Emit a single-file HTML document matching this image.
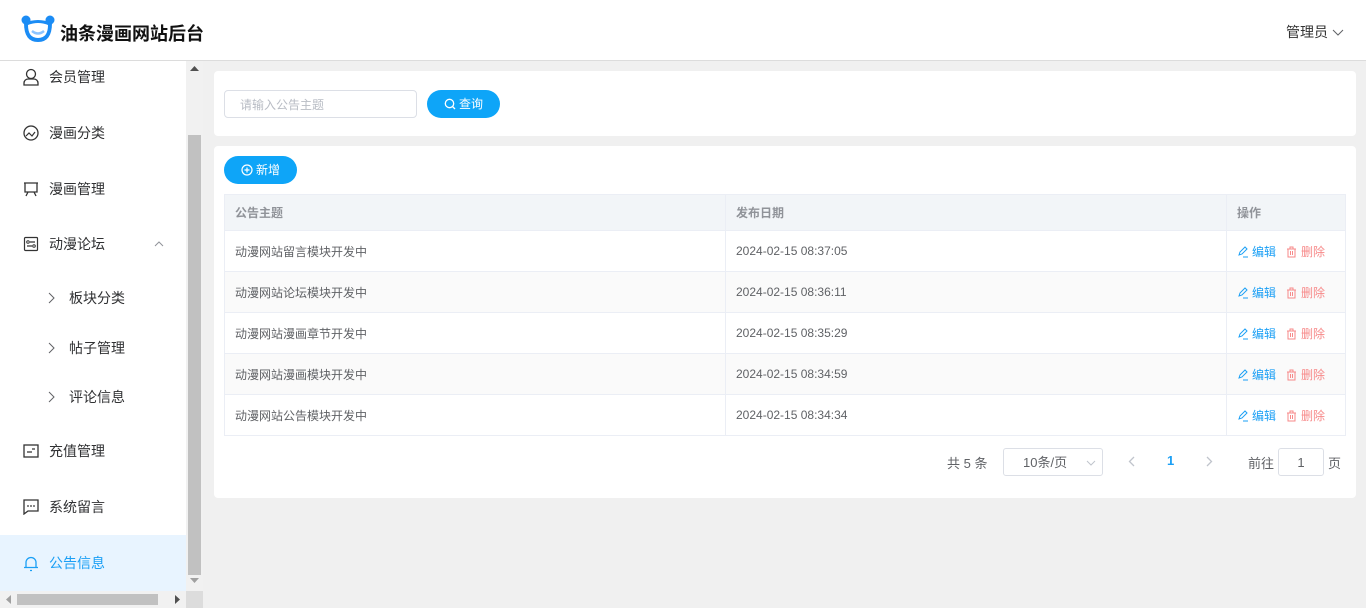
<!DOCTYPE html>
<html><head><meta charset="utf-8"><style>
*{box-sizing:border-box;margin:0;padding:0}
body{width:1366px;height:608px;overflow:hidden;font-family:"Liberation Sans","Noto Sans CJK SC",sans-serif;background:#f0f0f0;position:relative;color:#606266}
.hdr{position:absolute;left:0;top:0;width:1366px;height:61px;background:#fff;border-bottom:1px solid #dcdcdc}
.logo{position:absolute;left:21px;top:15px}
.title{position:absolute;left:60px;top:20px;font-size:18px;font-weight:bold;color:#111}
.user{position:absolute;left:1286px;top:22px;font-size:14px;color:#333}
.side{position:absolute;left:0;top:61px;width:186px;height:530px;background:#fff;overflow:hidden}
.mi{position:absolute;left:0;width:186px;height:56px;font-size:14px;color:#303133}
.mi span{position:absolute;left:49px;top:50%;transform:translateY(-50%)}
.mi svg{position:absolute;left:23px;top:50%;transform:translateY(-50%)}
.sub span{left:69px}
.sub svg{left:47px}
.act{background:#e8f4ff;color:#1a9ff5}
.vs{position:absolute;left:186px;top:61px;width:17px;height:530px;background:#f1f1f1}
.thumb{position:absolute;left:188px;top:135px;width:13px;height:440px;background:#c1c1c1}
.hs{position:absolute;left:0;top:591px;width:186px;height:17px;background:#f1f1f1}
.hthumb{position:absolute;left:17px;top:594px;width:141px;height:11px;background:#c1c1c1}
.corner{position:absolute;left:186px;top:591px;width:17px;height:17px;background:#dcdcdc}
.card{position:absolute;left:214px;width:1142px;background:#fff;border-radius:4px}
.inp{position:absolute;left:224px;top:90px;width:193px;height:28px;border:1px solid #dcdfe6;border-radius:4px;font-size:12px;color:#b8bcc4;padding:5px 15px}
.btn{position:absolute;height:28px;background:#0ea5f8;color:#fff;border-radius:14px;font-size:12px;line-height:28px;text-align:center}
.btn svg{vertical-align:-2px;margin-right:3px}
table{position:absolute;left:224px;top:194px;width:1122px;border-collapse:collapse;font-size:12px}
td,th{border:1px solid #ebeef5;height:41px;padding:0 10px;text-align:left;color:#606266;font-weight:normal}
th{height:36px;background:#f2f5f8;color:#909399;font-weight:bold}
tr:nth-child(odd) td{background:#fafafa}
.ed{color:#1a9ff5}.de{color:#f78989;margin-left:10px}
.ed svg,.de svg{vertical-align:-2px;margin-right:4px}
.pg{position:absolute;font-size:13px;color:#606266}
</style></head><body>
<div class="hdr">
<svg class="logo" width="34" height="28" viewBox="0 0 34 28"><circle cx="5" cy="5" r="4.5" fill="#1b8cf5"/><circle cx="29" cy="5" r="4.5" fill="#1b8cf5"/><path d="M3 8 Q3 27 17 27 Q31 27 31 8 Q17 2 3 8z" fill="#1b8cf5"/><path d="M7 10 Q7 23 17 23 Q27 23 27 10 Q17 6 7 10z" fill="#fff"/><path d="M11 16 q6 5 12 0" stroke="#8cc4ff" stroke-width="2.5" fill="none"/></svg>
<div class="title">油条漫画网站后台</div>
<div class="user">管理员 <svg width="12" height="8" viewBox="0 0 12 8"><path d="M1 1l5 5 5-5" stroke="#606266" fill="none"/></svg></div>
</div>
<div class="side">
<div class="mi" style="top:-12px"><svg width="16" height="18" viewBox="0 0 16 18"><circle cx="8" cy="6" r="4.5" stroke="#333" fill="none" stroke-width="1.3"/><path d="M1 17v-2a4 4 0 0 1 4-4h6a4 4 0 0 1 4 4v2z" stroke="#333" fill="none" stroke-width="1.3"/></svg><span>会员管理</span></div>
<div class="mi" style="top:44px"><svg width="16" height="16" viewBox="0 0 16 16"><circle cx="8" cy="8" r="7" stroke="#333" fill="none" stroke-width="1.3"/><path d="M3 11l3-3 3 3 3-4" stroke="#333" fill="none" stroke-width="1.2"/></svg><span>漫画分类</span></div>
<div class="mi" style="top:100px"><svg width="16" height="16" viewBox="0 0 16 16"><path d="M1 2h14M2 2v9h12V2M5 11l-2 4M11 11l2 4" stroke="#333" fill="none" stroke-width="1.3"/></svg><span>漫画管理</span></div>
<div class="mi" style="top:155px"><svg width="16" height="16" viewBox="0 0 16 16"><rect x="1.5" y="1.5" width="13" height="13" rx="1" stroke="#333" fill="none" stroke-width="1.2"/><circle cx="5" cy="6" r="1.3" stroke="#333" fill="none"/><path d="M7 6h5M4 10h5" stroke="#333" stroke-width="1.2"/><circle cx="11" cy="10" r="1.3" stroke="#333" fill="none"/></svg><span>动漫论坛</span><svg style="left:154px" width="10" height="6" viewBox="0 0 10 6"><path d="M1 5l4-4 4 4" stroke="#909399" fill="none"/></svg></div>
<div class="mi sub" style="top:209px"><svg width="8" height="12" viewBox="0 0 8 12"><path d="M2 1l5 5-5 5" stroke="#606266" fill="none"/></svg><span>板块分类</span></div>
<div class="mi sub" style="top:259px"><svg width="8" height="12" viewBox="0 0 8 12"><path d="M2 1l5 5-5 5" stroke="#606266" fill="none"/></svg><span>帖子管理</span></div>
<div class="mi sub" style="top:308px"><svg width="8" height="12" viewBox="0 0 8 12"><path d="M2 1l5 5-5 5" stroke="#606266" fill="none"/></svg><span>评论信息</span></div>
<div class="mi" style="top:362px"><svg width="16" height="14" viewBox="0 0 16 14"><rect x="1" y="1" width="14" height="12" stroke="#333" fill="none" stroke-width="1.3"/><path d="M4 8h5M9 5h3" stroke="#333" stroke-width="1.3"/></svg><span>充值管理</span></div>
<div class="mi" style="top:418px"><svg width="16" height="16" viewBox="0 0 16 16"><path d="M1 1h14v11H5l-4 3z" stroke="#333" fill="none" stroke-width="1.3"/><circle cx="5" cy="7" r=".9" fill="#333"/><circle cx="8" cy="7" r=".9" fill="#333"/><circle cx="11" cy="7" r=".9" fill="#333"/></svg><span>系统留言</span></div>
<div class="mi act" style="top:474px"><svg width="16" height="17" viewBox="0 0 16 17"><path d="M3 13V8a5 5 0 0 1 10 0v5zM1 13h14M7 16h2" stroke="#1a9ff5" fill="none" stroke-width="1.3"/></svg><span>公告信息</span></div>
</div>
<div class="vs"></div><div class="thumb"></div>
<svg style="position:absolute;left:190px;top:66px" width="9" height="6"><path d="M0 5h9L4.5 0z" fill="#505050"/></svg>
<svg style="position:absolute;left:190px;top:578px" width="9" height="6"><path d="M0 0h9L4.5 5z" fill="#a0a0a0"/></svg>
<div class="hs"></div><div class="hthumb"></div><div class="corner"></div>
<svg style="position:absolute;left:6px;top:595px" width="6" height="9"><path d="M5 0v9L0 4.5z" fill="#a0a0a0"/></svg>
<svg style="position:absolute;left:175px;top:595px" width="6" height="9"><path d="M0 0v9l5-4.5z" fill="#505050"/></svg>

<div class="card" style="top:71px;height:65px"></div>
<div class="inp">请输入公告主题</div>
<div class="btn" style="left:427px;top:90px;width:73px"><svg width="12" height="12" viewBox="0 0 12 12"><circle cx="5.5" cy="5.5" r="4.2" stroke="#fff" fill="none" stroke-width="1.3"/><path d="M8.5 8.5l2.5 2.5" stroke="#fff" stroke-width="1.3"/></svg>查询</div>
<div class="card" style="top:146px;height:352px"></div>
<div class="btn" style="left:224px;top:156px;width:73px"><svg width="12" height="12" viewBox="0 0 12 12"><circle cx="6" cy="6" r="5" stroke="#fff" fill="none" stroke-width="1.2"/><path d="M6 3.5v5M3.5 6h5" stroke="#fff" stroke-width="1.2"/></svg>新增</div>
<table>
<tr><th style="width:501px">公告主题</th><th style="width:501px">发布日期</th><th>操作</th></tr>
<tr><td>动漫网站留言模块开发中</td><td>2024-02-15 08:37:05</td><td><span class="ed"><svg width="11" height="12" viewBox="0 0 11 12"><path d="M2 9l1-3 5-5 2 2-5 5zM6 11h5" stroke="#1a9ff5" fill="none"/></svg>编辑</span><span class="de"><svg width="11" height="12" viewBox="0 0 11 12"><path d="M1 3h9M4 3V1h3v2M2 3v8h7V3M4.5 5v4M6.5 5v4" stroke="#f78989" fill="none"/></svg>删除</span></td></tr>
<tr><td>动漫网站论坛模块开发中</td><td>2024-02-15 08:36:11</td><td><span class="ed"><svg width="11" height="12" viewBox="0 0 11 12"><path d="M2 9l1-3 5-5 2 2-5 5zM6 11h5" stroke="#1a9ff5" fill="none"/></svg>编辑</span><span class="de"><svg width="11" height="12" viewBox="0 0 11 12"><path d="M1 3h9M4 3V1h3v2M2 3v8h7V3M4.5 5v4M6.5 5v4" stroke="#f78989" fill="none"/></svg>删除</span></td></tr>
<tr><td>动漫网站漫画章节开发中</td><td>2024-02-15 08:35:29</td><td><span class="ed"><svg width="11" height="12" viewBox="0 0 11 12"><path d="M2 9l1-3 5-5 2 2-5 5zM6 11h5" stroke="#1a9ff5" fill="none"/></svg>编辑</span><span class="de"><svg width="11" height="12" viewBox="0 0 11 12"><path d="M1 3h9M4 3V1h3v2M2 3v8h7V3M4.5 5v4M6.5 5v4" stroke="#f78989" fill="none"/></svg>删除</span></td></tr>
<tr><td>动漫网站漫画模块开发中</td><td>2024-02-15 08:34:59</td><td><span class="ed"><svg width="11" height="12" viewBox="0 0 11 12"><path d="M2 9l1-3 5-5 2 2-5 5zM6 11h5" stroke="#1a9ff5" fill="none"/></svg>编辑</span><span class="de"><svg width="11" height="12" viewBox="0 0 11 12"><path d="M1 3h9M4 3V1h3v2M2 3v8h7V3M4.5 5v4M6.5 5v4" stroke="#f78989" fill="none"/></svg>删除</span></td></tr>
<tr><td>动漫网站公告模块开发中</td><td>2024-02-15 08:34:34</td><td><span class="ed"><svg width="11" height="12" viewBox="0 0 11 12"><path d="M2 9l1-3 5-5 2 2-5 5zM6 11h5" stroke="#1a9ff5" fill="none"/></svg>编辑</span><span class="de"><svg width="11" height="12" viewBox="0 0 11 12"><path d="M1 3h9M4 3V1h3v2M2 3v8h7V3M4.5 5v4M6.5 5v4" stroke="#f78989" fill="none"/></svg>删除</span></td></tr>
</table>
<div class="pg" style="left:947px;top:453px">共 5 条</div>
<div class="pg" style="left:1003px;top:448px;width:100px;height:28px;border:1px solid #dcdfe6;border-radius:3px;padding:3px 0 0 19px">10条/页<svg style="position:absolute;left:82px;top:11px" width="10" height="6" viewBox="0 0 10 6"><path d="M1 1l4 4 4-4" stroke="#c0c4cc" fill="none"/></svg></div>
<svg style="position:absolute;left:1128px;top:456px" width="7" height="11" viewBox="0 0 7 11"><path d="M6 1L1.5 5.5 6 10" stroke="#c0c4cc" fill="none" stroke-width="1.3"/></svg>
<div class="pg" style="left:1167px;top:453px;color:#1a9ff5;font-weight:bold">1</div>
<svg style="position:absolute;left:1206px;top:456px" width="7" height="11" viewBox="0 0 7 11"><path d="M1 1l4.5 4.5L1 10" stroke="#c0c4cc" fill="none" stroke-width="1.3"/></svg>
<div class="pg" style="left:1248px;top:453px">前往</div>
<div class="pg" style="left:1278px;top:448px;width:46px;height:28px;border:1px solid #dcdfe6;border-radius:3px;text-align:center;padding-top:6px">1</div>
<div class="pg" style="left:1328px;top:453px">页</div>
</body></html>
